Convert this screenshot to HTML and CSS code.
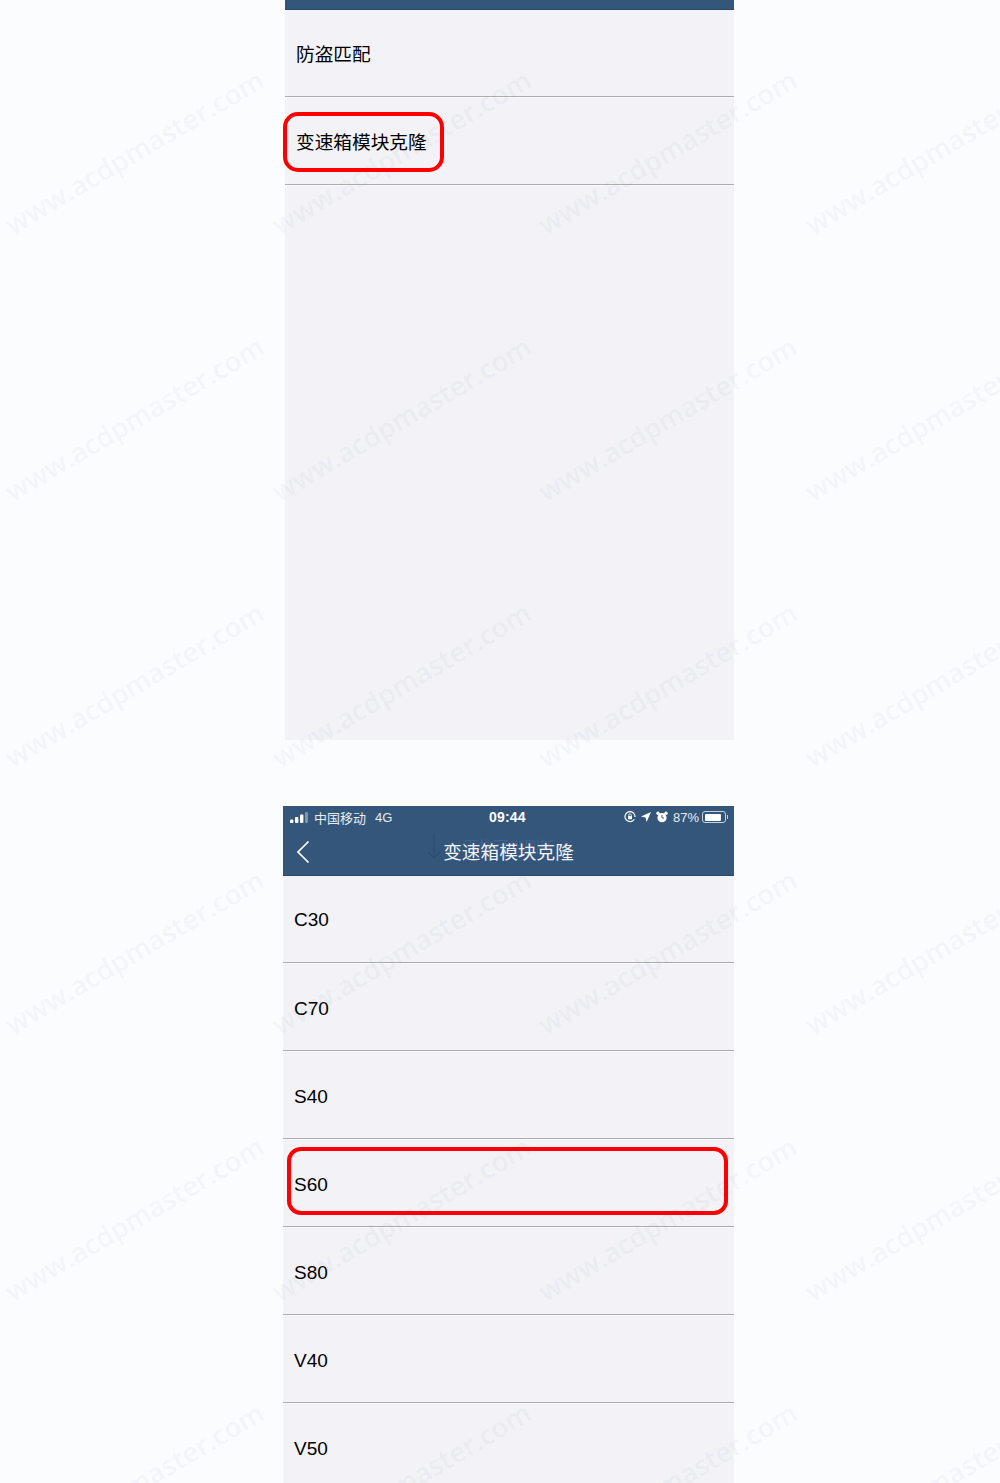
FILE: index.html
```html
<!DOCTYPE html>
<html lang="zh-CN">
<head>
    <meta charset="UTF-8">
    <meta name="viewport" content="width=device-width, initial-scale=1.0">
    <title>变速箱模块克隆</title>
    <link rel="stylesheet" href="styles.css">
</head>
<body>
    <div class="page">
        <!-- first screenshot: cropped under the nav bar -->
        <section class="screen screen-top">
            <div class="nav-strip"></div>
            <div class="row cn">防盗匹配</div>
            <div class="row cn">
                变速箱模块克隆
                <span class="mark mark-module"></span>
            </div>
        </section>

        <!-- second screenshot -->
        <section class="screen screen-bottom">
            <header class="nav">
                <div class="status">
                    <div class="status-left">
                        <svg class="signal" width="18" height="11" viewBox="0 0 18 11">
                            <rect x="0" y="7.5" width="3.4" height="3.5" rx="1" fill="#fff"/>
                            <rect x="5" y="5" width="3.4" height="6" rx="1" fill="#fff"/>
                            <rect x="10" y="2.5" width="3.4" height="8.5" rx="1" fill="#fff"/>
                            <rect x="15" y="0" width="3" height="11" rx="1" fill="#7f95ab"/>
                        </svg>
                        <span class="carrier">中国移动</span>
                        <span>4G</span>
                    </div>
                    <div class="status-time">09:44</div>
                    <div class="status-right">
                        <svg width="12" height="12" viewBox="0 0 12 12">
                            <path d="M10.3 8.2A5 5 0 1 1 11 6" fill="none" stroke="#fff" stroke-width="1.2"/>
                            <rect x="4" y="5" width="4" height="3.2" rx=".5" fill="#fff"/>
                            <path d="M4.8 5V4a1.2 1.2 0 0 1 2.4 0v1" fill="none" stroke="#fff" stroke-width=".8"/>
                        </svg>
                        <svg width="10" height="10" viewBox="0 0 10 10">
                            <path d="M10 0 L5.6 10 L4.5 5.5 L0 4.4 Z" fill="#fff"/>
                        </svg>
                        <svg width="12" height="12" viewBox="0 0 12 12">
                            <circle cx="6" cy="6.7" r="4.6" fill="#fff"/>
                            <circle cx="2" cy="2.2" r="1.7" fill="#fff"/>
                            <circle cx="10" cy="2.2" r="1.7" fill="#fff"/>
                            <path d="M6 4v3h2" fill="none" stroke="#34567a" stroke-width=".9"/>
                        </svg>
                        <span class="battery-pct">87%</span>
                        <span class="battery"><span class="battery-fill"></span></span>
                    </div>
                </div>
                <div class="nav-bar">
                    <svg class="back" width="14" height="24" viewBox="0 0 14 24">
                        <path d="M12.5 1.5 L2 12 L12.5 22.5" fill="none" stroke="#fff" stroke-width="1.7"/>
                    </svg>
                    <svg class="ghost-arrow" width="14" height="26" viewBox="0 0 14 26">
                        <path d="M7 0V25M1 19l6 6 6-6" fill="none" stroke="#2b4c70" stroke-width="1.2"/>
                    </svg>
                    <span class="ghost-text">下拉可以刷新</span>
                    <h1 class="title cn">变速箱模块克隆</h1>
                </div>
            </header>
            <div class="row">C30</div>
            <div class="row">C70</div>
            <div class="row">S40</div>
            <div class="row">
                S60
                <span class="mark mark-model"></span>
            </div>
            <div class="row">S80</div>
            <div class="row">V40</div>
            <div class="row">V50</div>
        </section>

        <div class="watermarks">
            <span>www.acdpmaster.com</span><span>www.acdpmaster.com</span><span>www.acdpmaster.com</span><span>www.acdpmaster.com</span>
            <span>www.acdpmaster.com</span><span>www.acdpmaster.com</span><span>www.acdpmaster.com</span><span>www.acdpmaster.com</span>
            <span>www.acdpmaster.com</span><span>www.acdpmaster.com</span><span>www.acdpmaster.com</span><span>www.acdpmaster.com</span>
            <span>www.acdpmaster.com</span><span>www.acdpmaster.com</span><span>www.acdpmaster.com</span><span>www.acdpmaster.com</span>
            <span>www.acdpmaster.com</span><span>www.acdpmaster.com</span><span>www.acdpmaster.com</span><span>www.acdpmaster.com</span>
            <span>www.acdpmaster.com</span><span>www.acdpmaster.com</span><span>www.acdpmaster.com</span><span>www.acdpmaster.com</span>
        </div>
    </div>
</body>
</html>
```

FILE: styles.css
```css
* {
    margin: 0;
    padding: 0;
    box-sizing: border-box;
}

body {
    font-family: 'Liberation Sans', 'Noto Sans CJK SC', sans-serif;
    background: #fbfcfe;
    color: #000;
}

.page {
    position: relative;
    width: 1000px;
    height: 1483px;
    overflow: hidden;
}

.screen {
    background: #f2f2f7;
}

.screen-top {
    width: 449px;
    height: 740px;
    margin-left: 285px;
}

.screen-bottom {
    width: 451px;
    height: 677px;
    margin-top: 66px;
    margin-left: 283px;
    overflow: hidden;
}

.nav-strip {
    height: 10px;
    background: #34567a;
    border-bottom: 1px solid #244a6e;
}

.row {
    position: relative;
    display: flex;
    align-items: center;
    height: 88px;
    padding: 4px 0 0 11px;
    font-size: 19px;
    border-bottom: 1px solid #adadaf;
    box-shadow: 0 1px 0 #fafafc;
}

.nav + .row {
    height: 87px;
    padding-top: 2px;
}

.screen-top .row {
    padding-top: 0;
    font-size: 18.67px;
}

.nav-strip + .row {
    height: 87px;
    padding-top: 0;
    padding-bottom: 2px;
}

.mark {
    position: absolute;
    border: 4px solid #fe0000;
}

.mark-module {
    left: -2px;
    top: 15px;
    width: 161px;
    height: 60px;
    border-radius: 15px;
}

.mark-model {
    left: 4px;
    top: 8px;
    width: 441px;
    height: 68px;
    border-radius: 14px;
}

.nav {
    height: 70px;
    background: #34567a;
    border-bottom: 1px solid #244a6e;
    color: #fff;
}

.status {
    position: relative;
    display: flex;
    justify-content: space-between;
    align-items: center;
    height: 22px;
    padding: 0 8px 0 7px;
    font-size: 13px;
    color: #e8edf2;
}

.status-left {
    display: flex;
    align-items: center;
}

.signal {
    margin-right: 6px;
}

.carrier {
    margin-right: 9px;
}

.status-time {
    position: absolute;
    left: 206px;
    font-weight: 700;
    font-size: 14px;
    letter-spacing: 0.2px;
    color: #fff;
}

.status-right {
    display: flex;
    align-items: center;
    gap: 5px;
}

.battery-pct {
    margin-right: -2px;
}

.battery {
    display: block;
    position: relative;
    width: 24px;
    height: 12px;
    padding: 1.5px;
    border: 1px solid #c8d2dc;
    border-radius: 3px;
}

.battery::after {
    content: "";
    position: absolute;
    right: -3px;
    top: 3px;
    width: 1.5px;
    height: 4px;
    background: #c8d2dc;
}

.battery-fill {
    display: block;
    width: 87%;
    height: 100%;
    background: #fff;
    border-radius: 1px;
}

.nav-bar {
    position: relative;
    display: flex;
    justify-content: center;
    align-items: center;
    height: 44px;
}

.back {
    position: absolute;
    left: 13px;
    top: 12px;
}

.title {
    position: relative;
    font-size: 18.67px;
    font-weight: 400;
    color: #f2f4f7;
}

.ghost-arrow {
    position: absolute;
    left: 144px;
    top: 5px;
}

.ghost-text {
    position: absolute;
    left: 180px;
    top: 6px;
    font-size: 15.3px;
    color: #41618a;
}

.watermarks {
    position: absolute;
    left: 0;
    top: 71px;
    display: grid;
    grid-template-columns: repeat(4, 266.67px);
    grid-auto-rows: 266.67px;
    pointer-events: none;
}

.watermarks span {
    width: max-content;
    height: 40px;
    margin: 61px 0 0 -13px;
    font-family: 'Open Sans', sans-serif;
    font-size: 27.3px;
    font-weight: 600;
    line-height: 40px;
    white-space: nowrap;
    color: rgba(40, 50, 70, 0.055);
    transform: rotate(-30.5deg);
}
```
